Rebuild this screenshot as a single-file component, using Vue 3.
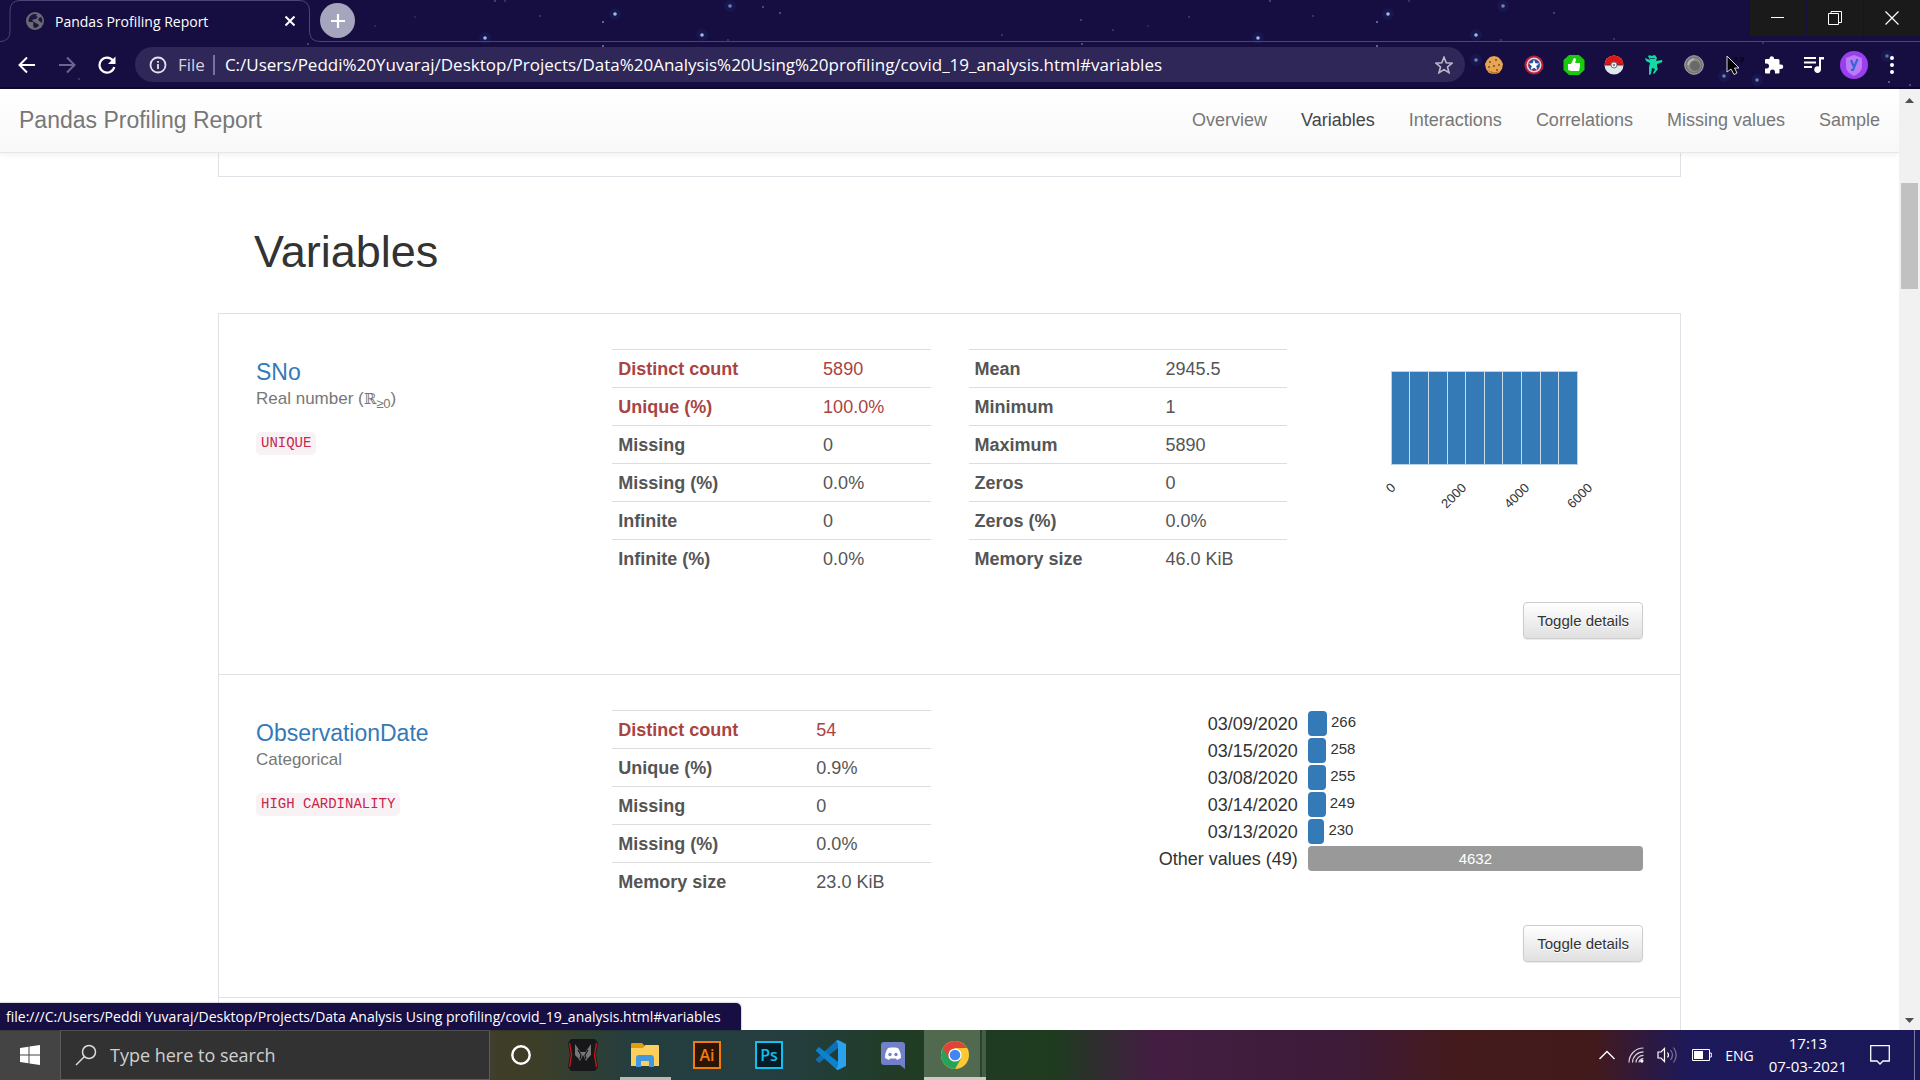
<script setup>
import { ref } from 'vue'

const address = ref('C:/Users/Peddi%20Yuvaraj/Desktop/Projects/Data%20Analysis%20Using%20profiling/covid_19_analysis.html#variables')
const query = ref('')

// [x, y, radius, opacity] of each star in the browser theme
const stars = [
  [485, 38, 2, 0.9], [615, 14, 2, 0.9], [603, 22, 1, 0.7], [603, 46, 1, 0.7], [415, 17, 1, 0.2], [375, 26, 1, 0.2],
  [308, 44, 1, 0.4], [79, 79, 1, 0.3], [495, 1, 1, 0.4], [505, 1, 1, 0.3], [540, 16, 1, 0.3], [730, 6, 2, 0.6],
  [763, 7, 1, 0.5], [780, 13, 1, 0.5], [702, 35, 2, 0.9], [728, 40, 1, 0.3], [1002, 35, 1, 0.3], [1081, 20, 1, 0.4],
  [1113, 30, 1, 0.3], [1148, 26, 1, 0.2], [1189, 17, 1, 0.3], [1082, 44, 1, 0.5], [1258, 38, 2, 0.9], [1270, 1, 1, 0.4],
  [1313, 16, 1, 0.3], [1388, 14, 2, 0.9], [1377, 22, 1, 0.7], [1377, 46, 1, 0.7], [1409, 1, 1, 0.3], [1503, 6, 2, 0.6],
  [1476, 35, 2, 0.9], [1501, 40, 1, 0.3], [1554, 13, 1, 0.4], [1614, 39, 1, 0.3], [1476, 60, 2, 0.6], [1724, 76, 2, 0.6],
  [1757, 80, 2, 0.6], [1763, 43, 1, 0.3], [1887, 56, 2, 0.5], [1889, 82, 1, 0.6], [1910, 85, 1, 0.5]
]

const links = ['Overview', 'Variables', 'Interactions', 'Correlations', 'Missing values', 'Sample']

const snoLeft = [
  ['Distinct count', '5890', true],
  ['Unique (%)', '100.0%', true],
  ['Missing', '0'],
  ['Missing (%)', '0.0%'],
  ['Infinite', '0'],
  ['Infinite (%)', '0.0%']
]
const snoRight = [
  ['Mean', '2945.5'],
  ['Minimum', '1'],
  ['Maximum', '5890'],
  ['Zeros', '0'],
  ['Zeros (%)', '0.0%'],
  ['Memory size', '46.0 KiB']
]
const dateStats = [
  ['Distinct count', '54', true],
  ['Unique (%)', '0.9%'],
  ['Missing', '0'],
  ['Missing (%)', '0.0%'],
  ['Memory size', '23.0 KiB']
]
const frequencies = [
  ['03/09/2020', 266],
  ['03/15/2020', 258],
  ['03/08/2020', 255],
  ['03/14/2020', 249],
  ['03/13/2020', 230]
]
const otherCount = 4632
const ticks = [[0, 66, 139], [2000, 129, 147], [4000, 192, 147], [6000, 255, 147]]
</script>

<template>
  <div class="desktop">
    <header class="chrome">
      <svg class="stars" aria-hidden="true">
        <g v-for="(s, i) in stars" :key="i">
          <circle v-if="s[2] > 1" :cx="s[0]" :cy="s[1]" r="6" fill="#2450a0" opacity="0.15" />
          <circle :cx="s[0]" :cy="s[1]" :r="s[2] * 0.9" fill="#b9c4ee" :opacity="s[3]" />
        </g>
      </svg>

      <div class="strip">
        <div class="tab">
          <svg class="tab-shape" width="320" height="42" aria-hidden="true">
            <path d="M0 41.500Q10 41.500 10 31V11Q10 .5 20 .5H299Q309.500 .5 309.500 11V31Q309.500 41.500 320 41.500" fill="none" stroke="#4b4474" />
          </svg>
          <svg class="globe" width="18" height="18" viewBox="0 0 18 18" aria-hidden="true">
            <circle cx="9" cy="9" r="9" fill="#696b70" />
            <path d="M9 2Q5 2 3 6Q2 9 3 10L7 10Q8 12 7 13L8 16Q12 16 13 13L10 11Q8 11 6 8Q8 7 10 7L12 5L10 4L11 2M13 6L12 8L16 11Q17 7 15 5Z" fill="#1d1645" />
          </svg>
          <span class="tab-title">Pandas Profiling Report</span>
          <button class="bare tab-close" aria-label="Close tab">
            <svg width="12" height="12" viewBox="0 0 12 12"><path d="M1.500 1.500L10.500 10.500M10.500 1.500L1.500 10.500" stroke="#fff" stroke-width="2" /></svg>
          </button>
        </div>
        <div class="strip-rest">
          <button class="bare new-tab" aria-label="New tab">
            <svg width="16" height="16" viewBox="0 0 16 16"><path d="M8 1V15M1 8H15" stroke="#fff" stroke-width="2.200" /></svg>
          </button>
          <div class="window-buttons">
            <button class="bare" aria-label="Minimize"><svg width="14" height="14" viewBox="0 0 14 14"><path d="M0 6.500H13" stroke="#fff" /></svg></button>
            <button class="bare" aria-label="Restore"><svg width="14" height="14" viewBox="0 0 14 14"><path d="M.5 2.500H10.500V13.500H.5ZM3 2.500V.5H13.500V11.500H10.500" fill="none" stroke="#fff" /></svg></button>
            <button class="bare" aria-label="Close"><svg width="14" height="14" viewBox="0 0 14 14"><path d="M.5 .5L13.500 13.500M13.500 .5L.5 13.500" stroke="#fff" stroke-width="1.200" /></svg></button>
          </div>
        </div>
      </div>

      <div class="toolbar">
        <div class="nav-buttons">
          <button class="bare" aria-label="Back"><svg width="18" height="18" viewBox="0 0 18 18"><path d="M17 9H2M9 1.500L1.500 9L9 16.500" fill="none" stroke="#fff" stroke-width="2" /></svg></button>
          <button class="bare" aria-label="Forward"><svg width="18" height="18" viewBox="0 0 18 18"><path d="M1 9H16M9 1.500L16.500 9L9 16.500" fill="none" stroke="#6c6590" stroke-width="2" /></svg></button>
          <button class="bare" aria-label="Reload"><svg width="18" height="18" viewBox="0 0 18 18"><path d="M15 4.500A7.500 7.500 0 1 0 16.300 11" fill="none" stroke="#fff" stroke-width="2.200" /><path d="M17.500 .5V8H10Z" fill="#fff" /></svg></button>
        </div>
        <div class="omnibox">
          <svg width="18" height="18" viewBox="0 0 18 18" aria-hidden="true"><circle cx="9" cy="9" r="7.500" fill="none" stroke="#e4e2ee" stroke-width="1.800" /><path d="M9 8V13M9 5V6.800" stroke="#e4e2ee" stroke-width="1.800" /></svg>
          <label class="scheme" for="address">File</label>
          <input id="address" v-model="address" class="address" type="text" spellcheck="false" />
          <button class="bare" aria-label="Bookmark this page"><svg width="18" height="18" viewBox="0 0 18 18"><path d="M9 1.200L11.200 6.800L17 7.200L12.500 11L14 16.700L9 13.600L4 16.700L5.500 11L1 7.200L6.800 6.800Z" fill="none" stroke="#bcb9cb" stroke-width="1.600" /></svg></button>
        </div>
        <div class="extensions">
          <button class="bare" aria-label="Cookies"><svg width="20" height="20" viewBox="0 0 20 20"><path d="M10 1L14 2L17 5L19 9L18 14L15 18L10 19L5 18L2 14L1 9L3 5L6 2Z" fill="#e6a552" /><path d="M3 14Q8 19 16 16L12 19H8Z" fill="#b97527" /><path d="M5 6H7V8H5ZM11 4H13V6H11ZM9 10H11V12H9ZM14 9H16V11H14ZM4 11H6V13H4ZM12 14H14V16H12Z" fill="#9a6124" /></svg></button>
          <button class="bare" aria-label="Shield"><svg width="20" height="20" viewBox="0 0 20 20"><circle cx="10" cy="10" r="9.500" fill="#b5213a" /><circle cx="10" cy="10" r="7.500" fill="#d5dbe6" /><circle cx="10" cy="10" r="6" fill="#c02b41" /><circle cx="10" cy="10" r="5.200" fill="#1b51b4" /><path d="M10 4.500L11.400 8.300L15.300 8.500L12.200 11L13.300 15L10 12.700L6.700 15L7.800 11L4.700 8.500L8.600 8.300Z" fill="#fff" /></svg></button>
          <button class="bare" aria-label="Like"><svg width="22" height="20" viewBox="0 0 22 20"><path d="M6 0H16L21.500 5V15L16 20H6L.5 15V5Z" fill="#19c90c" /><path d="M5 9H8L11 3Q13 3 13 5L12 8H17V11L16 16H8L5 15Z" fill="#fff" /></svg></button>
          <button class="bare" aria-label="Pokeball"><svg width="20" height="20" viewBox="0 0 20 20"><circle cx="10" cy="10" r="9.500" fill="#dfe8ec" /><path d="M.5 10A9.500 9.500 0 0 1 19.500 10Z" fill="#df1616" /><path d="M.5 10H19.500" stroke="#5a2a3c" /><circle cx="10" cy="10" r="3" fill="#eef2f4" stroke="#777" /><circle cx="10" cy="10" r="1.200" fill="#888" /></svg></button>
          <button class="bare" aria-label="Dancer"><svg width="18" height="20" viewBox="0 0 18 20"><path d="M3 1L5 0L6 1L10 0L12 3L11 6L17 5L17.500 7L12 9L12 12L13 14L9 19L8 18L10 14L7 13L6 19L4 20L4 12L5 8L1 6L0 3L5 5Z" fill="#0fdda4" /><path d="M5 3.500H10" stroke="#116052" /></svg></button>
          <button class="bare" aria-label="Sphere"><svg width="20" height="20" viewBox="0 0 20 20"><circle cx="10" cy="10" r="9.300" fill="#777" stroke="#aaa" /><circle cx="10" cy="10" r="7" fill="#8b8b8b" /><circle cx="11" cy="11" r="5" fill="#696969" /><path d="M4 10Q5 5 10 4" fill="none" stroke="#bbb" stroke-width="1.500" /></svg></button>
          <button class="bare" aria-label="Pointer position"><svg width="20" height="20" viewBox="0 0 20 20"><path d="M3 1V17L7 14L10 19.500L13 18L10.500 13H15Z" fill="#000" stroke="#d8d8d8" /><text x="10" y="6" font-size="8" font-family="Liberation Sans, sans-serif" fill="#000">x,y</text></svg></button>
          <button class="bare" aria-label="Extensions"><svg width="20" height="20" viewBox="0 0 20 20"><path d="M17 9.500H15.500V5.500Q15.500 4 14 4H10V3A2.300 2.300 0 0 0 5.500 3V4H2Q1 4 1 5V8.500H2.500A2.500 2.500 0 0 1 2.500 13.500H1V17.500Q1 18.500 2 18.500H6V17A2.500 2.500 0 0 1 11 17V18.500H14.500Q15.500 18.500 15.500 17.500V14H17A2.250 2.250 0 0 0 17 9.500Z" fill="#fff" /></svg></button>
          <button class="bare" aria-label="Media"><svg width="20" height="20" viewBox="0 0 20 20"><path d="M0 3H12M0 7.500H12M0 12H8" stroke="#fff" stroke-width="2" /><path d="M20 2H15V11.500A3.400 3.400 0 1 0 17 14.500V4.500H20Z" fill="#fff" /></svg></button>
          <button class="bare" aria-label="Profile"><svg width="28" height="28" viewBox="0 0 28 28"><circle cx="14" cy="14" r="14" fill="#9a3ef0" /><path d="M14 4L22 7V16Q22 21 14 25Q6 21 6 16V7Z" fill="#bb7bf5" /><path d="M11 9L13.500 15M17.500 8L13 19H11" fill="none" stroke="#3267d8" stroke-width="2.200" /></svg></button>
          <button class="bare" aria-label="Menu"><svg width="20" height="20" viewBox="0 0 20 20"><circle cx="10" cy="3" r="2" fill="#fff" /><circle cx="10" cy="10" r="2" fill="#fff" /><circle cx="10" cy="17" r="2" fill="#fff" /></svg></button>
        </div>
      </div>
    </header>

    <div class="viewport">
      <div class="page">
        <nav class="navbar">
          <a class="brand" href="#top">Pandas Profiling Report</a>
          <div class="links">
            <a v-for="l in links" :key="l" href="#variables" :class="{ active: l === 'Variables' }">{{ l }}</a>
          </div>
        </nav>

        <main class="container">
          <div class="panel previous"></div>
          <h1>Variables</h1>

          <div class="panel">
            <section class="variable">
              <div class="columns">
                <div class="summary">
                  <h2><a href="#sno">SNo</a></h2>
                  <p>Real number (<span class="set">ℝ</span><sub>≥0</sub>)</p>
                  <code>UNIQUE</code>
                </div>
                <table class="stats">
                  <tbody>
                    <tr v-for="r in snoLeft" :key="r[0]" :class="{ alert: r[2] }"><th scope="row">{{ r[0] }}</th><td>{{ r[1] }}</td></tr>
                  </tbody>
                </table>
                <table class="stats">
                  <tbody>
                    <tr v-for="r in snoRight" :key="r[0]"><th scope="row">{{ r[0] }}</th><td>{{ r[1] }}</td></tr>
                  </tbody>
                </table>
                <svg class="histogram" width="318" height="200" viewBox="0 0 318 200" role="img" aria-label="Histogram of SNo">
                  <rect x="66.500" y="22.500" width="186" height="93" fill="#337ab7" stroke="#b9d2e7" />
                  <path d="M84.500 22V115M103.500 22V115M122.500 22V115M140.500 22V115M159.500 22V115M177.500 22V115M196.500 22V115M215.500 22V115M233.500 22V115" stroke="#c9dcec" />
                  <text v-for="t in ticks" :key="t[0]" text-anchor="middle" :transform="`translate(${t[1]} ${t[2]}) rotate(-45)`" y="4">{{ t[0] }}</text>
                </svg>
              </div>
              <button class="toggle">Toggle details</button>
            </section>

            <section class="variable">
              <div class="columns">
                <div class="summary">
                  <h2><a href="#observationdate">ObservationDate</a></h2>
                  <p>Categorical</p>
                  <code>HIGH CARDINALITY</code>
                </div>
                <table class="stats">
                  <tbody>
                    <tr v-for="r in dateStats" :key="r[0]" :class="{ alert: r[2] }"><th scope="row">{{ r[0] }}</th><td>{{ r[1] }}</td></tr>
                  </tbody>
                </table>
                <table class="frequency">
                  <tbody>
                    <tr v-for="f in frequencies" :key="f[0]">
                      <th scope="row">{{ f[0] }}</th>
                      <td><div class="bar-row"><span class="bar" :style="{ width: (f[1] / otherCount) * 100 + '%' }"></span><span class="count">{{ f[1] }}</span></div></td>
                    </tr>
                    <tr>
                      <th scope="row">Other values (49)</th>
                      <td><div class="bar-row other">{{ otherCount }}</div></td>
                    </tr>
                  </tbody>
                </table>
              </div>
              <button class="toggle">Toggle details</button>
            </section>

            <section class="variable next"></section>
          </div>
        </main>
      </div>

      <div class="scrollbar" aria-hidden="true">
        <svg width="9" height="5" viewBox="0 0 9 5"><path d="M4.500 0L9 5H0Z" fill="#505050" /></svg>
        <div class="track"><div class="thumb"></div></div>
        <svg width="9" height="5" viewBox="0 0 9 5"><path d="M0 0H9L4.500 5Z" fill="#505050" /></svg>
      </div>

      <div class="status">file:///C:/Users/Peddi Yuvaraj/Desktop/Projects/Data Analysis Using profiling/covid_19_analysis.html#variables</div>
    </div>

    <footer class="taskbar">
      <button class="bare start" aria-label="Start"><svg width="20" height="20" viewBox="0 0 20 20"><path d="M0 3L8.500 1.800V9.500H0ZM9.500 1.600L20 0V9.500H9.500ZM0 10.500H8.500V18.200L0 17ZM9.500 10.500H20V20L9.500 18.400Z" fill="#fff" /></svg></button>
      <div class="search">
        <svg width="22" height="22" viewBox="0 0 22 22" aria-hidden="true"><circle cx="14" cy="8" r="6.500" fill="none" stroke="#ddd" stroke-width="1.500" /><path d="M9.500 12.500L1 21" stroke="#ddd" stroke-width="1.500" /></svg>
        <input v-model="query" type="text" placeholder="Type here to search" aria-label="Type here to search" />
      </div>
      <div class="apps">
        <button class="bare" aria-label="Cortana"><svg width="22" height="22" viewBox="0 0 22 22"><circle cx="11" cy="11" r="8.700" fill="none" stroke="#fff" stroke-width="2.400" /></svg></button>
        <button class="bare" aria-label="PredatorSense"><svg width="30" height="32" viewBox="0 0 30 32"><path d="M3 0H27L30 4L28 16L30 28L27 32H3L0 28L2 16L0 4Z" fill="#17171a" /><path d="M1.500 4L3.500 16L1.500 28M28.500 4L26.500 16L28.500 28" fill="none" stroke="#c4161c" stroke-width="1.400" /><path d="M7 5L12.500 13H17.500L23 5V16L20 19L18 22L15 16L12 22L10 19L7 16Z" fill="#77777a" /><path d="M10 11L13 16L12 20M20 11L17 16L18 20" stroke="#17171a" fill="none" stroke-width="1.200" /></svg></button>
        <button class="bare running" aria-label="File Explorer"><svg width="28" height="26" viewBox="0 0 28 26"><path d="M0 2Q0 1 1 1H11L13 3V8H0Z" fill="#e09c0c" /><path d="M0 6H12L14 3H27Q28 3 28 4V24H0Z" fill="#fdd05d" /><path d="M5 24V16Q5 13 8 13H20Q23 13 23 16V25H18V19H10V25H5Z" fill="#4298e0" /></svg></button>
        <button class="bare" aria-label="Illustrator"><svg width="28" height="28" viewBox="0 0 28 28"><rect x="1" y="1" width="26" height="26" fill="#2c1505" stroke="#ef7b11" stroke-width="2" /><text x="14" y="20" text-anchor="middle" font-family="Open Sans, sans-serif" font-size="16" font-weight="600" fill="#ef7b11">Ai</text></svg></button>
        <button class="bare" aria-label="Photoshop"><svg width="28" height="28" viewBox="0 0 28 28"><rect x="1" y="1" width="26" height="26" fill="#051c26" stroke="#12bfee" stroke-width="2" /><text x="14" y="20" text-anchor="middle" font-family="Open Sans, sans-serif" font-size="16" font-weight="600" fill="#12bfee">Ps</text></svg></button>
        <button class="bare" aria-label="Visual Studio Code"><svg width="30" height="30" viewBox="0 0 30 30"><path d="M22 0V8L3 23L0 20V19L20 1Z" fill="#0f6fb4" /><path d="M22 30V22L3 7L0 10V11L20 29Z" fill="#0d82cf" /><path d="M22 0L30 4V26L22 30L20 29L22 26V4L20 1Z" fill="#2ba2ee" /></svg></button>
        <button class="bare" aria-label="Discord"><svg width="24" height="28" viewBox="0 0 24 28"><path d="M3 1H21Q24 1 24 4V28L19 24H3Q0 24 0 21V4Q0 1 3 1Z" fill="#7180c8" /><path d="M7 7L10 6.500H14L17 7Q20 11 20 17L16 19L15 17.500H9L8 19L4 17Q4 11 7 7Z" fill="#fff" /><circle cx="9" cy="13.500" r="1.700" fill="#7180c8" /><circle cx="15" cy="13.500" r="1.700" fill="#7180c8" /></svg></button>
        <button class="bare running current" aria-label="Google Chrome"><svg width="28" height="28" viewBox="0 0 28 28"><circle cx="14" cy="14" r="14" fill="#fcc934" /><path d="M14 14L1.900 7A14 14 0 0 0 14 28L20 17.500Z" fill="#25a35a" /><path d="M1.900 7A14 14 0 0 1 26.100 7H14L8 17.500Z" fill="#df4436" /><circle cx="14" cy="14" r="6.600" fill="#fff" /><circle cx="14" cy="14" r="5.300" fill="#4285f4" /></svg></button>
      </div>
      <div class="tray">
        <button class="bare" aria-label="Show hidden icons"><svg width="16" height="10" viewBox="0 0 16 10"><path d="M.5 9L8 1.500L15.500 9" fill="none" stroke="#fff" stroke-width="1.400" /></svg></button>
        <button class="bare" aria-label="Wi-Fi"><svg width="16" height="16" viewBox="0 0 16 16"><path d="M1 15.500A14.500 14.500 0 0 1 15.500 1M4.500 15.500A11 11 0 0 1 15.500 4.800M8 15.500A7.500 7.500 0 0 1 15.500 8.300M11 15.500A4.500 4.500 0 0 1 15.500 11.500" fill="none" stroke="#d8d4e4" stroke-width="1.200" /><circle cx="13.800" cy="14" r="1.700" fill="#fff" /></svg></button>
        <button class="bare" aria-label="Volume"><svg width="22" height="18" viewBox="0 0 22 18"><path d="M1 6H4L7.500 2.500V15.500L4 12H1Z" fill="none" stroke="#fff" stroke-width="1.200" /><path d="M10.500 6.500Q12.500 9 10.500 11.500" fill="none" stroke="#fff" stroke-width="1.200" /><path d="M13.500 4Q17.500 9 13.500 14M16.500 1.500Q22 9 16.500 16.500" fill="none" stroke="#77749f" stroke-width="1.200" /></svg></button>
        <button class="bare" aria-label="Battery"><svg width="20" height="12" viewBox="0 0 20 12"><path d="M.5 .5H17.500V11.500H.5ZM17.500 4H19.300V8H17.500" fill="none" stroke="#fff" /><path d="M2 2H11V10H2Z" fill="#fff" /></svg></button>
        <span class="lang">ENG</span>
        <time class="clock"><span>17:13</span><span>07-03-2021</span></time>
        <button class="bare" aria-label="Notifications"><svg width="20" height="20" viewBox="0 0 20 20"><path d="M.7 .7H19.300V16H13L10 19L7 16H.7Z" fill="none" stroke="#fff" stroke-width="1.300" /></svg></button>
      </div>
    </footer>
  </div>
</template>

<style>
body {
  margin: 0;
  overflow: hidden;
}
</style>

<style scoped>
* {
  box-sizing: border-box;
}
svg {
  display: block;
  flex: none;
}
.desktop {
  display: flex;
  flex-direction: column;
  height: 100vh;
  font-family: "Liberation Sans", Arial, sans-serif;
  font-size: 18px;
  color: #333;
  background: #fff;
}
.bare {
  display: flex;
  align-items: center;
  justify-content: center;
  padding: 0;
  border: 0;
  background: none;
}
.chrome {
  position: relative;
  flex: none;
  background: #160d41;
  border-bottom: 2px solid #0e072e;
  color: #fff;
  font-family: "Open Sans", "Noto Sans", sans-serif;
}
.stars {
  position: absolute;
  inset: 0;
  width: 100%;
  height: 100%;
}
.strip {
  position: relative;
  display: flex;
  height: 42px;
}
.tab {
  position: relative;
  display: flex;
  align-items: center;
  width: 320px;
  padding: 0 24px 0 26px;
  background: transparent;
}
.tab-shape {
  position: absolute;
  inset: 0;
}
.tab-title {
  flex: 1;
  margin-left: 11px;
  font-size: 14px;
}
.strip-rest {
  display: flex;
  flex: 1;
  align-items: center;
  justify-content: space-between;
  border-bottom: 1px solid #4b4474;
}
.new-tab {
  width: 35px;
  height: 35px;
  border-radius: 50%;
  background: #a5a5bd;
}
.window-buttons {
  display: flex;
  align-self: flex-start;
  gap: 1px;
}
.window-buttons button {
  width: 56px;
  height: 36px;
  background: #1a1a1a;
}
.toolbar {
  position: relative;
  display: flex;
  align-items: center;
  height: 45px;
  padding: 0 10px 0 18px;
}
.nav-buttons {
  display: flex;
  gap: 22px;
  width: 117px;
}
.omnibox {
  display: flex;
  flex: 1;
  align-items: center;
  height: 35px;
  padding: 0 12px 0 14px;
  border-radius: 18px;
  background: #2f2758;
}
.scheme {
  margin-left: 11px;
  padding-right: 8px;
  border-right: 2px solid #78739a;
  font-size: 17px;
  line-height: 20px;
  color: #d5d3de;
}
.address {
  flex: 1;
  min-width: 0;
  margin: 0 10px;
  padding: 0;
  border: 0;
  outline: 0;
  background: none;
  color: #fff;
  font-family: inherit;
  font-size: 17px;
}
.extensions {
  display: flex;
  margin-left: 9px;
}
.extensions button {
  width: 40px;
}
.extensions button:nth-last-child(1) {
  width: 36px;
}

.viewport {
  position: relative;
  display: flex;
  flex: 1;
  min-height: 0;
}
.page {
  flex: 1;
  min-width: 0;
  overflow: hidden;
}
.navbar {
  position: relative;
  display: flex;
  align-items: center;
  justify-content: space-between;
  height: 64px;
  padding: 0 19px;
  border-bottom: 1px solid #e7e7e7;
  background: linear-gradient(#fff, #f8f8f8);
  box-shadow: 0 1px 6px rgba(0, 0, 0, 0.075);
}
.navbar a {
  color: #777;
  text-decoration: none;
}
.navbar a.active {
  color: #444;
}
.brand {
  font-size: 23px;
}
.links {
  display: flex;
  gap: 34px;
}
.container {
  max-width: 1463px;
  margin: 0 auto;
}
.panel {
  border: 1px solid #e1e1e8;
}
.previous {
  height: 24px;
  border-top: 0;
}
h1 {
  margin: 50px 36px 36px;
  font-size: 45px;
  line-height: 50px;
  font-weight: 400;
}
.variable {
  display: flex;
  flex-direction: column;
  padding: 35px 37px;
}
.variable + .variable {
  border-top: 1px solid #e1e1e8;
}
.variable.next {
  height: 300px;
}
.columns {
  display: grid;
  grid-template-columns: repeat(4, minmax(0, 1fr));
  align-items: start;
  gap: 38px;
}
.summary {
  padding-top: 10px;
}
h2 {
  margin: 0;
  font-size: 23px;
  line-height: 27px;
  font-weight: 400;
}
h2 a {
  color: #337ab7;
  text-decoration: none;
}
p {
  margin: 0 0 19px;
  font-size: 17px;
  line-height: 26px;
  color: #777;
}
.set {
  font-family: "DejaVu Serif", serif;
  font-size: 15px;
}
sub {
  font-size: 13px;
  line-height: 0;
}
code {
  display: inline-block;
  padding: 0 5px;
  border-radius: 5px;
  background: #f9f2f4;
  color: #c7254e;
  font-family: "Liberation Mono", monospace;
  font-size: 14px;
  line-height: 23px;
}
table {
  border-collapse: separate;
  border-spacing: 0;
  width: 100%;
}
.stats {
  color: #555;
}
.stats th,
.stats td {
  height: 38px;
  padding: 0 6px;
  border-top: 1px solid #ddd;
  text-align: left;
  line-height: 24px;
}
.stats .alert {
  color: #a94442;
}
.histogram {
  max-width: 100%;
  height: 200px;
  font-size: 13px;
  fill: #333;
}
.frequency {
  grid-column: span 2;
  table-layout: fixed;
}
.frequency th {
  padding: 0 8px 0 0;
  font-weight: 400;
  text-align: right;
  line-height: 24px;
}
.frequency td {
  padding: 1px 0 1px 2px;
}
.bar-row {
  display: flex;
  gap: 4px;
  height: 25px;
  font-size: 15px;
  line-height: 22px;
}
.bar {
  border-radius: 4px;
  background: #337ab7;
}
.other {
  justify-content: center;
  border-radius: 4px;
  background: #999;
  color: #fff;
  line-height: 25px;
}
.toggle {
  align-self: flex-end;
  height: 37px;
  margin-top: 25px;
  padding: 0 13px;
  border: 1px solid #ccc;
  border-radius: 4px;
  background: linear-gradient(#fff, #e0e0e0);
  box-shadow: 0 1px 1px rgba(0, 0, 0, 0.08);
  color: #333;
  font-family: inherit;
  font-size: 15px;
  text-shadow: 0 1px 0 #fff;
}
.scrollbar {
  display: flex;
  flex-direction: column;
  align-items: center;
  width: 21px;
  padding: 9px 0 7px;
  background: #f1f1f1;
}
.track {
  flex: 1;
  width: 17px;
  padding-top: 80px;
}
.thumb {
  height: 106px;
  background: #c1c1c1;
}
.status {
  position: absolute;
  left: 0;
  bottom: 0;
  padding: 0 20px 0 6px;
  border-radius: 0 5px 0 0;
  background: #170e43;
  box-shadow: 0 0 1px 1px rgba(0, 0, 0, 0.15);
  color: #fff;
  font-family: "Open Sans", "Noto Sans", sans-serif;
  font-size: 14px;
  line-height: 27px;
}

.taskbar {
  display: flex;
  flex: none;
  height: 50px;
  background: linear-gradient(90deg, #444 0, #444 24%, #3f3d28 26%, #3c3e28 28%, #253e40 33%, #243e3f 41%, #203c24 47%, #1e3a1f 55%, #431e42 60%, #3d1b38 70%, #441a1c 76%, #431a1c 83%, #1d195b 88%, #1a1859 100%);
  color: #fff;
  font-family: "Open Sans", "Noto Sans", sans-serif;
  font-size: 14px;
}
.start {
  width: 60px;
}
.search {
  display: flex;
  align-items: center;
  width: 430px;
  padding: 0 14px;
  border: 1px solid #5c5c5c;
  background: #323232;
}
.search input {
  flex: 1;
  min-width: 0;
  margin-left: 13px;
  padding: 0;
  border: 0;
  outline: 0;
  background: none;
  color: #fff;
  font-family: inherit;
  font-size: 18px;
}
.search input::placeholder {
  color: #d0d0d0;
  opacity: 1;
}
.apps {
  display: flex;
  flex: 1;
}
.apps button {
  width: 62px;
}
.apps .running {
  background: linear-gradient(#b9b9b9, #b9b9b9) center bottom / 51px 3px no-repeat;
}
.apps .current {
  background: linear-gradient(#cfc9c6, #cfc9c6) left bottom / 100% 3px no-repeat, linear-gradient(90deg, #50694f 91%, #2b422d 91%, #2b422d 93%, #455c45 93%);
}
.tray {
  display: flex;
  align-items: center;
  gap: 13px;
  padding-right: 24px;
  margin-right: 5px;
  border-right: 1px solid #7c7a9e;
}
.clock {
  display: flex;
  flex-direction: column;
  align-items: center;
  padding: 0 10px 0 2px;
  font-size: 15px;
  line-height: 23px;
}
</style>
